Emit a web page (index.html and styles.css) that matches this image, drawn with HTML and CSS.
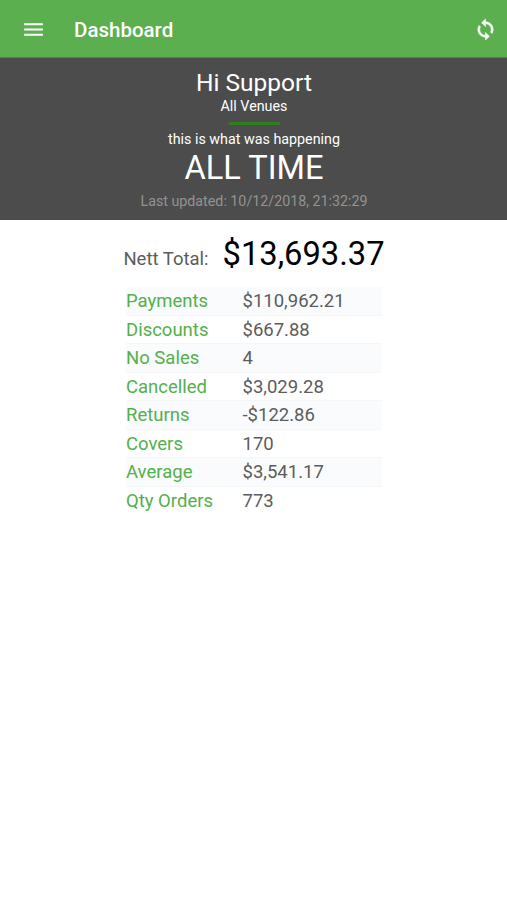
FILE: index.html
```html
<!DOCTYPE html>
<html lang="en">
<head>
    <meta charset="UTF-8">
    <title>Dashboard</title>
    <link rel="stylesheet" href="styles.css">
</head>
<body>
    <header class="toolbar">
        <svg class="icon-menu" viewBox="0 0 24 24"><path d="M3 18h18v-2H3v2zm0-5h18v-2H3v2zm0-7v2h18V6H3z"/></svg>
        <h1>Dashboard</h1>
        <svg class="icon-sync" viewBox="0 0 24 24"><path d="M12 4V1L8 5l4 4V6c3.31 0 6 2.69 6 6 0 1.01-.25 1.97-.7 2.8l1.46 1.46C19.54 15.03 20 13.57 20 12c0-4.42-3.58-8-8-8zm0 14c-3.31 0-6-2.69-6-6 0-1.01.25-1.97.7-2.8L5.24 7.74C4.46 8.97 4 10.43 4 12c0 4.42 3.58 8 8 8v3l4-4-4-4v3z"/></svg>
    </header>

    <section class="summary">
        <div class="greeting">Hi Support</div>
        <div class="venues">All Venues</div>
        <div class="divider"></div>
        <div class="caption">this is what was happening</div>
        <div class="period">ALL TIME</div>
        <div class="updated">Last updated: 10/12/2018, 21:32:29</div>
    </section>

    <main>
        <div class="total">
            <span class="total-label">Nett Total:</span>
            <span class="total-value">$13,693.37</span>
        </div>
        <table class="stats">
            <tr><th>Payments</th><td>$110,962.21</td></tr>
            <tr><th>Discounts</th><td>$667.88</td></tr>
            <tr><th>No Sales</th><td>4</td></tr>
            <tr><th>Cancelled</th><td>$3,029.28</td></tr>
            <tr><th>Returns</th><td>-$122.86</td></tr>
            <tr><th>Covers</th><td>170</td></tr>
            <tr><th>Average</th><td>$3,541.17</td></tr>
            <tr><th>Qty Orders</th><td>773</td></tr>
        </table>
    </main>
</body>
</html>
```

FILE: styles.css
```css
body {
    margin: 0;
    background-color: #fff;
    font-family: Roboto, sans-serif;
}
.toolbar {
    display: flex;
    align-items: center;
    height: 58px;
    box-sizing: border-box;
    padding: 2px 10px 0 21px;
    border-bottom: 1px solid #4c8447;
    background-color: #5baf4e;
    color: #fff;
}
.toolbar h1 {
    flex: 1;
    margin: 0 0 0 28px;
    font-size: 20.5px;
    font-weight: 500;
}
.toolbar svg {
    width: 25px;
    height: 25px;
    fill: #fff;
}
.toolbar .icon-sync {
    width: 23px;
    height: 23px;
    stroke: #fff;
    stroke-width: 0.6;
}
.summary {
    height: 162px;
    box-sizing: border-box;
    padding: 10px 0 0 1px;
    background-color: #4c4c4c;
    color: #fff;
    text-align: center;
}
.greeting {
    font-size: 24.5px;
    line-height: 30px;
}
.venues {
    font-size: 14.3px;
    line-height: 16px;
}
.divider {
    width: 51px;
    height: 3px;
    margin: 8px auto 5px;
    background-color: #2f7d1e;
}
.caption {
    font-size: 14.3px;
    line-height: 18px;
}
.period {
    padding-top: 1px;
    font-size: 32.6px;
    line-height: 38px;
}
.updated {
    margin-top: 5px;
    color: #939393;
    font-size: 14.25px;
    line-height: 18px;
}
.total {
    display: flex;
    justify-content: center;
    align-items: baseline;
    gap: 14px;
    height: 67px;
    padding-left: 1px;
    line-height: 68px;
}
.total-label {
    color: #5c5c5c;
    font-size: 18.5px;
}
.total-value {
    color: #000;
    font-size: 32.7px;
}
.stats {
    width: 256px;
    margin: 0 auto;
    border-spacing: 0;
    font-size: 18.5px;
}
.stats tr:nth-child(odd) {
    background-color: #f9fbfd;
}
.stats th,
.stats td {
    height: 26.5px;
    padding: 1px 0 0;
    border-bottom: 1px solid #f4f6f7;
    text-align: left;
    font-weight: 400;
}
.stats tr:last-child th,
.stats tr:last-child td {
    border-bottom: none;
}
.stats th {
    width: 116.5px;
    padding-left: 0.5px;
    color: #53b04b;
}
.stats td {
    color: #5c5c5c;
}
```
